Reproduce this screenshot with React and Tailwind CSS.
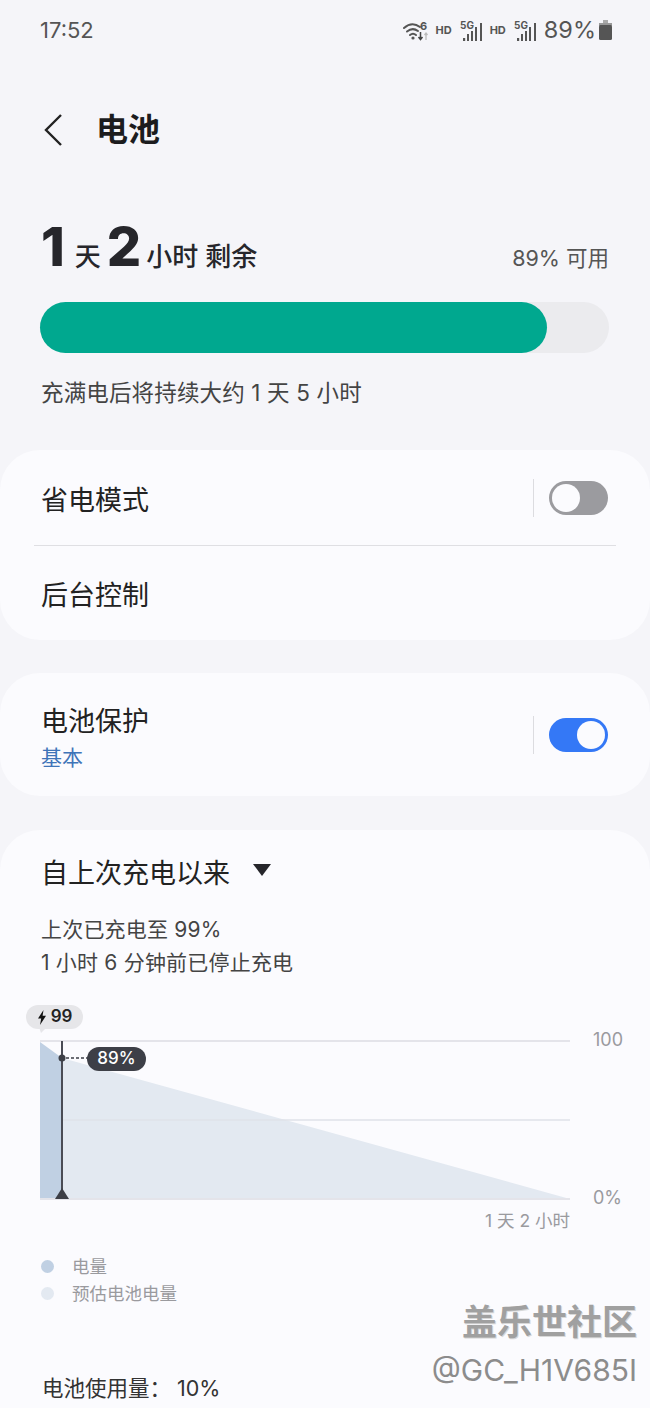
import React from "react";

const font = { fontFamily: 'Inter, "Noto Sans CJK SC", sans-serif' };

function Signal() {
  return (
    <svg width="23" height="24" viewBox="0 0 23 24" className="block">
      <text x="0" y="11" fontSize="10" fontWeight="700" fill="#555" fontFamily="Inter, sans-serif">5G</text>
      <g fill="#555">
        <rect x="3" y="20" width="2.2" height="3" />
        <rect x="7" y="16" width="2" height="7" />
        <rect x="11" y="13" width="2" height="10" />
        <rect x="15" y="9" width="2" height="14" />
        <rect x="20" y="5" width="2" height="18" />
      </g>
    </svg>
  );
}

function Wifi() {
  return (
    <svg width="26" height="24" viewBox="0 0 26 24" className="block">
      <g fill="none" stroke="#555" strokeWidth="2" strokeLinecap="round" transform="translate(0 2)">
        <path d="M1 8 Q9 1 17 7" />
        <path d="M4 11.5 Q9.5 7 15 11" />
        <path d="M7 15 Q10 12.5 13 15" />
      </g>
      <circle cx="10" cy="20" r="1.6" fill="#555" />
      <text x="17" y="12" fontSize="11" fontWeight="700" fill="#555" fontFamily="Inter, sans-serif">6</text>
      <path d="M17.5 14v7M15.5 19l2 2.5 2-2.5" stroke="#444" strokeWidth="1.5" fill="none" />
      <path d="M23 22v-7M21.5 17l1.5-2 1.5 2" stroke="#bbb" strokeWidth="1.3" fill="none" />
    </svg>
  );
}

function Toggle({ on }) {
  return (
    <div className="flex items-center">
      <div className="w-px h-[38px] bg-[#dcdce0] mr-[15px]" />
      <div
        className={
          on
            ? "w-[59px] h-[34px] rounded-full bg-[#3478f6] flex items-center justify-end pr-[3px]"
            : "w-[59px] h-[34px] rounded-full bg-[#9b9b9f] flex items-center pl-[3px]"
        }
      >
        <div className="w-[28px] h-[28px] rounded-full bg-[#fbfbfe]" />
      </div>
    </div>
  );
}

function Chart() {
  return (
    <div className="relative h-[250px] mt-[20px]">
      <svg width="650" height="250" viewBox="0 0 650 250" className="block absolute left-0 top-0">
        <polygon points="62,59 570,200 62,200" fill="#e3e9f1" />
        <polygon points="40,43 62,59 62,200 40,200" fill="#c0d0e3" />
        <line x1="40" y1="42" x2="570" y2="42" stroke="#e4e4ea" strokeWidth="2" />
        <line x1="62" y1="121" x2="570" y2="121" stroke="#dfe2e9" strokeWidth="1.5" />
        <line x1="40" y1="200" x2="570" y2="200" stroke="#e4e4ea" strokeWidth="2" />
        <line x1="62" y1="42" x2="62" y2="198" stroke="#4a4c55" strokeWidth="2" />
        <polygon points="55,200 69,200 62,189" fill="#3d3f47" />
        <circle cx="62" cy="59" r="3.5" fill="#3d3f47" />
        <line x1="66" y1="59" x2="88" y2="59" stroke="#3d3f47" strokeWidth="1.5" strokeDasharray="3 2" />
        <polygon points="39,28 47,28 41,34" fill="#e6e6e9" />
      </svg>
      <div className="absolute left-[26px] top-[6px] w-[57px] h-[24px] rounded-full bg-[#e6e6e9] flex items-center justify-center text-[17px] font-semibold text-[#222]">
        <svg width="10" height="15" viewBox="0 0 10 15" className="mr-[4px]">
          <path d="M6.5 0 L1 8.5 H4.2 L3 15 L9 5.8 H5.6 Z" fill="#111" />
        </svg>
        99
      </div>
      <div className="absolute left-[87px] top-[48px] w-[59px] h-[24px] rounded-full bg-[#3d3f47] flex items-center justify-center text-[17px] font-medium text-white">
        89%
      </div>
      <div className="absolute left-[593px] top-[30px] text-[18px] leading-[22px] text-[#9a9a9e]">100</div>
      <div className="absolute left-[593px] top-[188px] text-[18px] leading-[22px] text-[#9a9a9e]">0%</div>
      <div className="absolute right-[80px] top-[210px] text-[17.5px] leading-[24px] text-[#9a9a9e]">1 天 2 小时</div>
    </div>
  );
}

export default function App() {
  return (
    <div className="relative h-[1408px] w-[650px] overflow-hidden bg-[#f5f5f9]" style={font}>
      <div className="h-[60px] flex items-center justify-between pl-[40px] pr-[38px] text-[#555]">
        <span className="text-[22px]">17:52</span>
        <div className="flex items-center">
          <Wifi />
          <span className="text-[11px] font-bold ml-[6px] mr-[8px]">HD</span>
          <Signal />
          <span className="text-[11px] font-bold ml-[7px] mr-[8px]">HD</span>
          <Signal />
          <span className="text-[23.5px] ml-[7px]">89%</span>
          <svg width="13" height="20" viewBox="0 0 13 20" className="ml-[3px]">
            <rect x="4" y="0" width="5" height="3" fill="#aaa" />
            <rect x="0" y="3" width="13" height="3" fill="#999" />
            <rect x="0" y="5" width="13" height="15" rx="1.5" fill="#555" />
          </svg>
        </div>
      </div>

      <div className="flex items-center h-[52px] mt-[44px] pl-[44px]">
        <svg width="18" height="32" viewBox="0 0 18 32" className="block">
          <path d="M17 1 L2 16 L17 31" fill="none" stroke="#222" strokeWidth="2.4" />
        </svg>
        <span className="ml-[34px] text-[32px] font-semibold text-[#1c1c1e] leading-[52px]">电池</span>
      </div>

      <div className="mt-[61px] pl-[41px] pr-[41px] flex items-baseline justify-between h-[69px]">
        <div className="flex items-baseline text-[#26262b]">
          <span className="text-[54px] font-extrabold leading-[60px]">1</span>
          <span className="text-[26px] font-medium ml-[10px]">天</span>
          <span className="text-[54px] font-extrabold leading-[60px] ml-[6px]">2</span>
          <span className="text-[26px] font-medium ml-[5px]">小时 剩余</span>
        </div>
        <span className="text-[21.5px] text-[#555]">89% 可用</span>
      </div>

      <div className="ml-[40px] mr-[41px] mt-[16px] h-[51px] rounded-full bg-[#ebebee]">
        <div className="h-[51px] w-[507px] rounded-full bg-[#00a88f]" />
      </div>

      <p className="ml-[41px] mt-[25px] text-[22.5px] tracking-[0.15px] leading-[30px] text-[#444]">充满电后将持续大约 1 天 5 小时</p>

      <div className="mt-[42px] h-[190px] rounded-[40px] bg-[#fbfbfe]">
        <div className="h-[95px] pl-[41px] pr-[42px] flex items-center justify-between">
          <span className="text-[27px] text-[#222] pt-[7px]">省电模式</span>
          <Toggle />
        </div>
        <div className="mx-[34px] h-px bg-[#dfdfe3]" />
        <div className="h-[94px] pl-[41px] flex items-center">
          <span className="text-[27px] text-[#222] pt-[7px]">后台控制</span>
        </div>
      </div>

      <div className="mt-[33px] h-[123px] rounded-[40px] bg-[#fbfbfe] pl-[41px] pr-[42px] flex items-center justify-between">
        <div className="flex flex-col pt-[11px]">
          <span className="text-[27px] leading-[36px] text-[#222]">电池保护</span>
          <span className="text-[21px] leading-[36px] text-[#3f74b8]">基本</span>
        </div>
        <Toggle on />
      </div>

      <div className="mt-[34px] h-[600px] rounded-t-[40px] bg-[#fbfbfe]">
        <div className="pl-[41px] pt-[23px] flex items-center h-[63px]">
          <span className="text-[27px] text-[#222] pt-[2px]">自上次充电以来</span>
          <svg width="18" height="12" viewBox="0 0 18 12" className="ml-[23px] -mt-[6px]">
            <polygon points="0,0 18,0 9,12" fill="#26262b" />
          </svg>
        </div>
        <div className="pl-[41px] mt-[20px] text-[21px] tracking-[0.2px] leading-[33px] text-[#444]">
          <p>上次已充电至 99%</p>
          <p>1 小时 6 分钟前已停止充电</p>
        </div>
        <Chart />
        <div className="ml-[41px] mt-[4px] text-[17.5px] leading-[27px] text-[#9a9a9e]">
          <div className="flex items-center">
            <div className="w-[13px] h-[13px] rounded-full bg-[#c0d0e3] mr-[18px]" />
            电量
          </div>
          <div className="flex items-center">
            <div className="w-[13px] h-[13px] rounded-full bg-[#e3e9f1] mr-[18px]" />
            预估电池电量
          </div>
        </div>
        <p className="ml-[42px] mt-[66px] text-[21.5px] leading-[30px] text-[#333]">电池使用量： 10%</p>
      </div>

      <div className="absolute right-[13px] top-[1300px] text-right">
        <div className="text-[35px] leading-[44px] font-bold text-[#a0a0a0] [text-shadow:1px_1px_0_#d8d8d8]">盖乐世社区</div>
        <div className="text-[30px] leading-[40px] mt-[6px] text-[#8c8c8c] font-normal">@GC_H1V685I</div>
      </div>
    </div>
  );
}
